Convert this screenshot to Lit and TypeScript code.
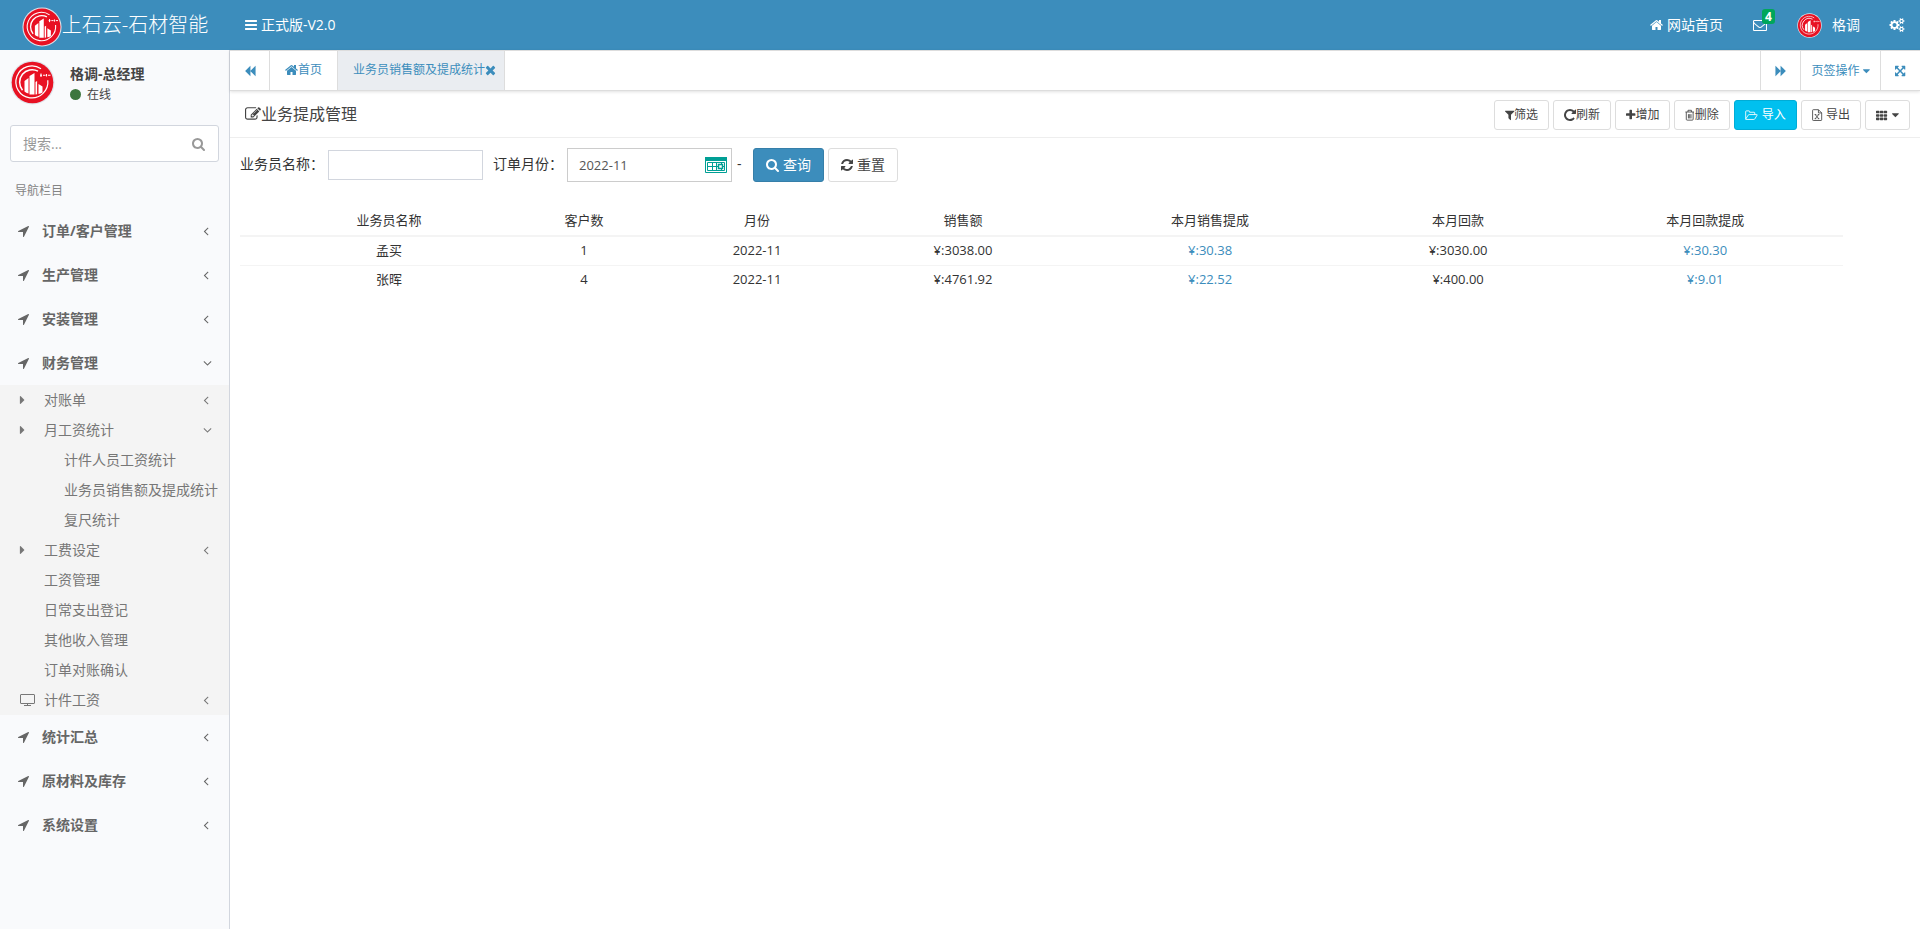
import { LitElement, html, svg, css, nothing } from "lit";
import { customElement, property, state } from "lit/decorators.js";
import { classMap } from "lit/directives/class-map.js";

/** Glyphs on a 1792-unit em: [left edge, advance, path data]. */
const ICONS: Record<string, [number, number, string]> = {
  arrow: [192, 1408, "M1593 349l-640 1280q-17 35-57 35-5 0-15-2-22-5-35.5-22.5t-13.5-39.5v-576h-576q-22 0-39.5-13.5t-22.5-35.5 4-42 29-30l1280-640q13-7 29-7 27 0 45 19 15 14 18.5 34.5t-6.5 39.5z"],
  left: [512, 640, "M1203 544q0 13-10 23l-393 393 393 393q10 10 10 23t-10 23l-50 50q-10 10-23 10t-23-10l-466-466q-10-10-10-23t10-23l466-466q10-10 23-10t23 10l50 50q10 10 10 23z"],
  down: [320, 1152, "M1395 736q0 13-10 23l-466 466q-10 10-23 10t-23-10l-466-466q-10-10-10-23t10-23l50-50q10-10 23-10t23 10l393 393 393-393q10-10 23-10t23 10l50 50q10 10 10 23z"],
  caretRight: [592, 576, "M1152 896q0 26-19 45l-448 448q-19 19-45 19t-45-19-19-45v-896q0-26 19-45t45-19 45 19l448 448q19 19 19 45z"],
  caretDown: [384, 1024, "M1408 704q0 26-19 45l-448 448q-19 19-45 19t-45-19l-448-448q-19-19-19-45t19-45 45-19h896q26 0 45 19t19 45z"],
  bars: [128, 1536, "M1664 1344v128q0 26-19 45t-45 19h-1408q-26 0-45-19t-19-45v-128q0-26 19-45t45-19h1408q26 0 45 19t19 45zm0-512v128q0 26-19 45t-45 19h-1408q-26 0-45-19t-19-45v-128q0-26 19-45t45-19h1408q26 0 45 19t19 45zm0-512v128q0 26-19 45t-45 19h-1408q-26 0-45-19t-19-45v-128q0-26 19-45t45-19h1408q26 0 45 19t19 45z"],
  home: [64, 1664, "M1472 992v480q0 26-19 45t-45 19h-384v-384h-256v384h-384q-26 0-45-19t-19-45v-480q0-1 .5-3t.5-3l575-474 575 474q1 2 1 6zm223-69l-62 74q-8 9-21 11h-3q-13 0-21-7l-692-577-692 577q-12 8-24 7-13-2-21-11l-62-74q-8-10-7-23.5t11-21.5l719-599q32-26 76-26t76 26l244 204v-195q0-14 9-23t23-9h192q14 0 23 9t9 23v408l219 182q10 8 11 21.5t-7 23.5z"],
  search: [64, 1664, "M1216 832q0-185-131.5-316.5t-316.5-131.5-316.5 131.5-131.5 316.5 131.5 316.5 316.5 131.5 316.5-131.5 131.5-316.5zm512 832q0 52-38 90t-90 38q-54 0-90-38l-343-342q-179 124-399 124-143 0-273.5-55.5t-225-150-150-225-55.5-273.5 55.5-273.5 150-225 225-150 273.5-55.5 273.5 55.5 225 150 150 225 55.5 273.5q0 220-124 399l343 343q37 37 37 90z"],
  refresh: [128, 1536, "M1639 1056q0 5-1 7-64 268-268 434.5t-478 166.5q-146 0-282.5-55t-243.5-157l-129 129q-19 19-45 19t-45-19-19-45v-448q0-26 19-45t45-19h448q26 0 45 19t19 45-19 45l-137 137q71 66 161 102t187 36q134 0 250-65t186-179q11-17 53-117 8-23 30-23h192q13 0 22.5 9.5t9.5 22.5zm25-800v448q0 26-19 45t-45 19h-448q-26 0-45-19t-19-45 19-45l138-138q-148-137-349-137-134 0-250 65t-186 179q-11 17-53 117-8 23-30 23h-199q-13 0-22.5-9.5t-9.5-22.5v-7q65-268 270-434.5t480-166.5q146 0 284 55.5t245 156.5l130-129q19-19 45-19t45 19 19 45z"],
  repeat: [128, 1536, "M1664 256v448q0 26-19 45t-45 19h-448q-42 0-59-40-17-39 14-69l138-138q-148-137-349-137-104 0-198.5 40.5t-163.5 109.5-109.5 163.5-40.5 198.5 40.5 198.5 109.5 163.5 163.5 109.5 198.5 40.5q119 0 225-52t179-147q7-10 23-12 15 0 25 9l137 138q9 8 9.5 20.5t-7.5 22.5q-109 132-264 204.5t-327 72.5q-156 0-298-61t-245-164-164-245-61-298 61-298 164-245 245-164 298-61q147 0 284.5 55.5t244.5 156.5l130-129q29-31 70-14 39 17 39 59z"],
  plus: [192, 1408, "M1600 736v192q0 40-28 68t-68 28h-416v416q0 40-28 68t-68 28h-192q-40 0-68-28t-28-68v-416h-416q-40 0-68-28t-28-68v-192q0-40 28-68t68-28h416v-416q0-40 28-68t68-28h192q40 0 68 28t28 68v416h416q40 0 68 28t28 68z"],
  filter: [192, 1408, "M1595 295q17 41-14 70l-493 493v742q0 42-39 59-13 5-25 5-27 0-45-19l-256-256q-19-19-19-45v-486l-493-493q-31-29-14-70 17-39 59-39h1280q42 0 59 39z"],
  times: [192, 1408, "M1490 1322q0 40-28 68l-136 136q-28 28-68 28t-68-28l-294-294-294 294q-28 28-68 28t-68-28l-136-136q-28-28-28-68t28-68l294-294-294-294q-28-28-28-68t28-68l136-136q28-28 68-28t68 28l294 294 294-294q28-28 68-28t68 28l136 136q28 28 28 68t-28 68l-294 294 294 294q28 28 28 68z"],
  backward: [0, 1792, "M1683 141q19-19 32-13t13 32v1472q0 26-13 32t-32-13l-710-710q-8-9-13-19v710q0 26-13 32t-32-13l-710-710q-19-19-19-45t19-45l710-710q19-19 32-13t13 32v710q5-11 13-19z"],
  forward: [0, 1792, "M109 1651q-19 19-32 13t-13-32v-1472q0-26 13-32t32 13l710 710q8 8 13 19v-710q0-26 13-32t32 13l710 710q19 19 19 45t-19 45l-710 710q-19 19-32 13t-13-32v-710q-5 10-13 19z"],
  mail: [0, 1792, "M1664 1504v-768q-32 36-69 66-268 206-426 338-51 43-83 67t-86.5 48.5-102.5 24.5h-2q-48 0-102.5-24.5t-86.5-48.5-83-67q-158-132-426-338-37-30-69-66v768q0 13 9.5 22.5t22.5 9.5h1472q13 0 22.5-9.5t9.5-22.5zm0-1051v-24.5l-.5-13-3-12.5-5.5-9-9-7.5-14-2.5h-1472q-13 0-22.5 9.5t-9.5 22.5q0 168 147 284 193 152 401 317 6 5 35 29.5t46 37.5 44.5 31.5 50.5 27.5 43 9h2q20 0 43-9t50.5-27.5 44.5-31.5 46-37.5 35-29.5q208-165 401-317 54-43 100.5-115.5t46.5-131.5zm128-37v1088q0 66-47 113t-113 47h-1472q-66 0-113-47t-47-113v-1088q0-66 47-113t113-47h1472q66 0 113 47t47 113z"],
  cogs: [0, 1920, "M832 896q0-106-75-181t-181-75-181 75-75 181 75 181 181 75 181-75 75-181zm768 512q0-52-38-90t-90-38-90 38-38 90q0 53 37.5 90.5t90.5 37.5 90.5-37.5 37.5-90.5zm0-1024q0-52-38-90t-90-38-90 38-38 90q0 53 37.5 90.5t90.5 37.5 90.5-37.5 37.5-90.5zm-384 421v185q0 10-7 19.5t-16 10.5l-155 24q-11 35-32 76 34 48 90 115 7 11 7 20 0 12-7 19-23 30-82.5 89.5t-78.5 59.5q-11 0-21-7l-115-90q-37 19-77 31-11 108-23 155-7 24-30 24h-186q-11 0-20-7.5t-10-17.5l-23-153q-34-10-75-31l-118 89q-7 7-20 7-11 0-21-8-144-133-144-160 0-9 7-19 10-14 41-53t47-61q-23-44-35-82l-152-24q-10-1-17-9.5t-7-19.5v-185q0-10 7-19.5t16-10.5l155-24q11-35 32-76-34-48-90-115-7-11-7-20 0-12 7-20 22-30 82-89t79-59q11 0 21 7l115 90q34-18 77-32 11-108 23-154 7-24 30-24h186q11 0 20 7.5t10 17.5l23 153q34 10 75 31l118-89q8-7 20-7 11 0 21 8 144 133 144 160 0 8-7 19-12 16-42 54t-45 60q23 48 34 82l152 23q10 2 17 10.5t7 19.5zm640 533v140q0 16-149 31-12 27-30 52 51 113 51 138 0 4-4 7-122 71-124 71-8 0-46-47t-52-68q-20 2-30 2t-30-2q-14 21-52 68t-46 47q-2 0-124-71-4-3-4-7 0-25 51-138-18-25-30-52-149-15-149-31v-140q0-16 149-31 13-29 30-52-51-113-51-138 0-4 4-7 4-2 35-20t59-34 30-16q8 0 46 46.5t52 67.5q20-2 30-2t30 2q51-71 92-112l6-2q4 0 124 70 4 3 4 7 0 25-51 138 17 23 30 52 149 15 149 31zm0-1024v140q0 16-149 31-12 27-30 52 51 113 51 138 0 4-4 7-122 71-124 71-8 0-46-47t-52-68q-20 2-30 2t-30-2q-14 21-52 68t-46 47q-2 0-124-71-4-3-4-7 0-25 51-138-18-25-30-52-149-15-149-31v-140q0-16 149-31 13-29 30-52-51-113-51-138 0-4 4-7 4-2 35-20t59-34 30-16q8 0 46 46.5t52 67.5q20-2 30-2t30 2q51-71 92-112l6-2q4 0 124 70 4 3 4 7 0 25-51 138 17 23 30 52 149 15 149 31z"],
  edit: [0, 1792, "M888 1184l116-116-152-152-116 116v56h96v96h56zm440-720q-16-16-33 1l-350 350q-17 17-1 33t33-1l350-350q17-17 1-33zm80 594v190q0 119-84.5 203.5t-203.5 84.5h-832q-119 0-203.5-84.5t-84.5-203.5v-832q0-119 84.5-203.5t203.5-84.5h832q63 0 117 25 15 7 18 23 3 17-9 29l-49 49q-14 14-32 8-23-6-45-6h-832q-66 0-113 47t-47 113v832q0 66 47 113t113 47h832q66 0 113-47t47-113v-126q0-13 9-22l64-64q15-15 35-7t20 29zm-96-738l288 288-672 672h-288v-288zm444 132l-92 92-288-288 92-92q28-28 68-28t68 28l152 152q28 28 28 68t-28 68z"],
  expand: [128, 1536, "M1411 541l-355 355 355 355 144-144q29-31 70-14 39 17 39 59v448q0 26-19 45t-45 19h-448q-42 0-59-40-17-39 14-69l144-144-355-355-355 355 144 144q31 30 14 69-17 40-59 40h-448q-26 0-45-19t-19-45v-448q0-42 40-59 39-17 69 14l144 144 355-355-355-355-144 144q-19 19-45 19-12 0-24-5-40-17-40-59v-448q0-26 19-45t45-19h448q42 0 59 40 17 39-14 69l-144 144 355 355 355-355-144-144q-31-30-14-69 17-40 59-40h448q26 0 45 19t19 45v448q0 42-39 59-13 5-25 5-26 0-45-19z"],
  grid: [64, 1664, "M160 256h320q96 0 96 96v192q0 96-96 96h-320q-96 0-96-96v-192q0-96 96-96zm576 0h320q96 0 96 96v192q0 96-96 96h-320q-96 0-96-96v-192q0-96 96-96zm576 0h320q96 0 96 96v192q0 96-96 96h-320q-96 0-96-96v-192q0-96 96-96zM160 768h320q96 0 96 96v192q0 96-96 96h-320q-96 0-96-96v-192q0-96 96-96zm576 0h320q96 0 96 96v192q0 96-96 96h-320q-96 0-96-96v-192q0-96 96-96zm576 0h320q96 0 96 96v192q0 96-96 96h-320q-96 0-96-96v-192q0-96 96-96zM160 1280h320q96 0 96 96v192q0 96-96 96h-320q-96 0-96-96v-192q0-96 96-96zm576 0h320q96 0 96 96v192q0 96-96 96h-320q-96 0-96-96v-192q0-96 96-96zm576 0h320q96 0 96 96v192q0 96-96 96h-320q-96 0-96-96v-192q0-96 96-96z"],
};

/** Outlined glyphs on a 14-unit em: [width, path data]. */
const OUTLINES: Record<string, [number, string]> = {
  trash: [11, "M.5 3.5h10M3.5 3.5v-2h4v2M1.5 3.5v8.5q0 1 1 1h6q1 0 1-1v-8.5M4 6v5M5.5 6v5M7 6v5"],
  folder: [15, "M.8 11.5v-8.5q0-.8.8-.8h3q.8 0 .8.8v.8h5.200q.8 0 .8.8v1.900M.8 11.700l3-4.600q.400-.6 1.100-.6h8.800q.8 0 .400.7l-2.600 4.300q-.400.7-1.200.7h-9q-.9 0-.5-.5z"],
  excel: [12, "M7.500.8h-6q-.8 0-.8.8v11q0 .8.8.8h9q.8 0 .8-.8v-8zM7.500.8v3.800h3.800M3.800 6.500l4 4.800M7.800 6.500l-4 4.800M3.200 6.500h1.800M6.700 6.500h1.800M3.200 11.300h1.800M6.700 11.300h1.800"],
  monitor: [15, "M1 1.500h13q.5 0 .5.5v8q0 .5-.5.5h-13q-.5 0-.5-.5v-8q0-.5.5-.5zM7.500 10.500v2M4 12.500h7"],
};

function icon(name: string) {
  if (OUTLINES[name]) {
    const [w, d] = OUTLINES[name];
    return html`<svg class="icon" viewBox="0 0 ${w} 14" aria-hidden="true">
      ${svg`<path d=${d} fill="none" stroke="currentColor" stroke-width="1"></path>`}
    </svg>`;
  }
  const [x, w, d] = ICONS[name];
  return html`<svg class="icon" viewBox="${x} 0 ${w} 1792" aria-hidden="true">
    ${svg`<path d=${d} fill="currentColor"></path>`}
  </svg>`;
}

function brandMark() {
  return html`<svg class="mark" viewBox="0 0 45 45" aria-hidden="true">
    <circle cx="22.500" cy="22.500" r="22" fill="#dfe3ea"></circle>
    <circle cx="22.500" cy="22.500" r="20.800" fill="#e81123"></circle>
    <path d="M31 8.800a16 16 0 1 0 6.800 11.500" fill="none" stroke="#fff" stroke-width="1.200"></path>
    <path d="M28 11.200a12.500 12.500 0 0 0-15.500 19" fill="none" stroke="#fff" stroke-width="1.500"></path>
    <path d="M14.500 21l4-3v15.500q-2.500-.7-4-2zM19.500 16l5-3v21.500h-5zM25.500 22l1.600-1v13.300l-1.600.2zM28.500 24l4 2.500v6q-2 1.200-4 1.600z" fill="#fff"></path>
    <path d="M30 15.300h2M31 13.500v3.500M33 15.300h2.500M36.500 14v2.500M38 15.300h2.500" stroke="#fff" stroke-width="1.100"></path>
  </svg>`;
}

const sharedStyles = css`
  :host { display: block; }
  * { box-sizing: border-box; }
  .icon { display: block; flex: none; height: 1em; overflow: visible; }
  .mark { display: block; flex: none; }
  a { color: inherit; text-decoration: none; }
  button, input { font: inherit; color: inherit; margin: 0; }
  button { cursor: pointer; }
`;

@customElement("app-header")
class AppHeader extends LitElement {
  static styles = [sharedStyles, css`
    .bar { display: flex; align-items: center; height: 50px; background: #3c8dbc; color: #fff; }
    .brand { display: flex; align-items: center; justify-content: center; width: 230px; height: 50px; font-size: 20px; font-weight: 300; }
    .brand .mark { width: 40px; height: 40px; margin-top: 4px; }
    .link { display: flex; align-items: center; gap: 4px; height: 50px; padding: 0 15px; border: 0; background: none; }
    .right { display: flex; margin-left: auto; }
    .mail { position: relative; }
    .badge { position: absolute; top: 9px; right: 7px; padding: 2px 3px; border-radius: 3px; background: #00a65a; font-size: 12px; line-height: 11px; font-weight: 700; min-width: 13px; text-align: center; }
    .user { gap: 10px; }
    .user .mark { width: 25px; height: 25px; }
  `];
  render() {
    return html`<header class="bar">
      <a class="brand" href="#">${brandMark()}<span>上石云-石材智能</span></a>
      <button class="link">${icon("bars")}<span>正式版-V2.0</span></button>
      <nav class="right">
        <a class="link" href="#">${icon("home")}<span>网站首页</span></a>
        <a class="link mail" href="#" aria-label="4">${icon("mail")}<span class="badge">4</span></a>
        <a class="link user" href="#">${brandMark()}<span>格调</span></a>
        <a class="link" href="#">${icon("cogs")}</a>
      </nav>
    </header>`;
  }
}

interface Item {
  label: string;
  icon?: string;
  chevron?: "left" | "down";
  children?: Item[];
}

const MENU: Item[] = [
  { label: "订单/客户管理", chevron: "left" },
  { label: "生产管理", chevron: "left" },
  { label: "安装管理", chevron: "left" },
  {
    label: "财务管理",
    chevron: "down",
    children: [
      { label: "对账单", icon: "caretRight", chevron: "left" },
      {
        label: "月工资统计",
        icon: "caretRight",
        chevron: "down",
        children: [{ label: "计件人员工资统计" }, { label: "业务员销售额及提成统计" }, { label: "复尺统计" }],
      },
      { label: "工费设定", icon: "caretRight", chevron: "left" },
      { label: "工资管理" },
      { label: "日常支出登记" },
      { label: "其他收入管理" },
      { label: "订单对账确认" },
      { label: "计件工资", icon: "monitor", chevron: "left" },
    ],
  },
  { label: "统计汇总", chevron: "left" },
  { label: "原材料及库存", chevron: "left" },
  { label: "系统设置", chevron: "left" },
];

@customElement("app-sidebar")
class AppSidebar extends LitElement {
  static styles = [sharedStyles, css`
    :host { background: #f9fafc; border-right: 1px solid #d2d6de; }
    .user { display: flex; gap: 15px; padding: 10px; align-items: center; }
    .user .mark { width: 45px; height: 45px; }
    .who { display: flex; flex-direction: column; gap: 2px; color: #444; padding-top: 2px; }
    .name { font-weight: 700; line-height: 20px; }
    .state { display: flex; align-items: center; gap: 6px; font-size: 12px; line-height: 18px; }
    .dot { width: 11px; height: 11px; border-radius: 50%; background: #3c763d; }
    .search { display: flex; align-items: center; height: 37px; margin: 10px; border: 1px solid #d2d6de; border-radius: 3px; background: #fff; color: #999; }
    .query { flex: 1; min-width: 0; height: 35px; padding: 0 12px; border: 0; background: none; outline: 0; }
    .query::placeholder { color: #999; opacity: 1; }
    .go { padding: 0 13px; border: 0; background: none; }
    .caption { padding: 9px 15px; font-size: 12px; line-height: 19px; color: #848484; }
    ul { list-style: none; margin: 0; padding: 0; }
    .row { display: flex; align-items: center; padding-right: 15px; color: #777; height: 30px; white-space: nowrap; }
    .top { height: 44px; padding-left: 18px; font-weight: 700; color: #666; }
    .sub { padding-left: 20px; }
    .leaf { padding-left: 64px; padding-right: 0; }
    .lead { width: 24px; flex: none; }
    .chev { width: 11px; margin-left: auto; }
    .tree { background: #f4f4f4; }
  `];
  private row(item: Item, level: string): unknown {
    const lead = level === "top" ? "arrow" : item.icon;
    return html`<li>
      <a href="#" class=${classMap({ row: true, [level]: true })}>
        ${level === "leaf" ? nothing : html`<span class="lead">${lead ? icon(lead) : nothing}</span>`}
        <span>${item.label}</span>
        ${item.chevron ? html`<span class="chev">${icon(item.chevron)}</span>` : nothing}
      </a>
      ${item.children
        ? html`<ul class="tree">${item.children.map((c) => this.row(c, level === "top" ? "sub" : "leaf"))}</ul>`
        : nothing}
    </li>`;
  }
  render() {
    return html`
      <div class="user">${brandMark()}
        <div class="who"><span class="name">格调-总经理</span><span class="state"><span class="dot"></span>在线</span></div>
      </div>
      <form class="search">
        <input class="query" type="text" placeholder="搜索..." aria-label="搜索" />
        <button class="go" type="button" aria-label="搜索">${icon("search")}</button>
      </form>
      <div class="caption">导航栏目</div>
      <ul>${MENU.map((m) => this.row(m, "top"))}</ul>`;
  }
}

@customElement("app-tabs")
class AppTabs extends LitElement {
  static styles = [sharedStyles, css`
    .strip { display: flex; height: 41px; border-top: 1px solid #ddd; border-bottom: 1px solid #ddd; background: #fff; color: #3c8dbc; font-size: 12px; box-shadow: 0 1px 3px rgba(0, 0, 0, 0.12); }
    .cell { display: flex; align-items: center; justify-content: center; border: 0; border-right: 1px solid #ddd; background: none; padding: 0 15px; }
    .square { width: 40px; padding: 0; }
    .tab { padding-bottom: 2px; }
    .tab .icon { height: 14px; }
    .active { background: #eaedf1; padding: 0 8px 2px 15px; }
    .right { display: flex; margin-left: auto; border-left: 1px solid #ddd; }
    .right .cell:last-child { border-right: 0; width: 39px; }
    .ops { width: 80px; gap: 3px; padding: 0; }
  `];
  render() {
    return html`<nav class="strip">
      <button class="cell square" aria-label="向左">${icon("backward")}</button>
      <a class="cell tab" href="#">${icon("home")}首页</a>
      <a class="cell tab active" href="#">业务员销售额及提成统计${icon("times")}</a>
      <div class="right">
        <button class="cell square" aria-label="向右">${icon("forward")}</button>
        <button class="cell ops">页签操作 ${icon("caretDown")}</button>
        <button class="cell square" aria-label="全屏">${icon("expand")}</button>
      </div>
    </nav>`;
  }
}

const TOOLS = [
  { icon: "filter", label: "筛选" },
  { icon: "repeat", label: "刷新", big: true },
  { icon: "plus", label: "增加" },
  { icon: "trash", label: "删除" },
  { icon: "folder", label: "导入", spaced: true, info: true },
  { icon: "excel", label: "导出", spaced: true },
];

const COLUMNS = ["业务员名称", "客户数", "月份", "销售额", "本月销售提成", "本月回款", "本月回款提成"];
const ROWS = [
  ["孟买", "1", "2022-11", "¥:3038.00", "¥:30.38", "¥:3030.00", "¥:30.30"],
  ["张晖", "4", "2022-11", "¥:4761.92", "¥:22.52", "¥:400.00", "¥:9.01"],
];
const LINKED = new Set([4, 6]);

@customElement("commission-page")
class CommissionPage extends LitElement {
  @property() heading = "业务提成管理";
  @state() private month = "2022-11";
  static styles = [sharedStyles, css`
    .title { display: flex; align-items: center; justify-content: space-between; padding: 9px 10px 7px 15px; border-bottom: 1px solid #eee; }
    h1 { display: flex; align-items: center; margin: 0; padding-bottom: 2px; font-size: 16px; line-height: 24px; font-weight: 400; color: #444; }
    .tools { display: flex; gap: 4px; }
    .btn { display: flex; align-items: center; justify-content: center; border: 1px solid #ddd; border-radius: 3px; background: #fff; color: #444; white-space: nowrap; }
    .small { height: 30px; padding: 0 10px; font-size: 12px; }
    .big .icon { height: 14px; }
    .spaced { gap: 4px; }
    .columns { gap: 5px; }
    .info { background: #00c0ef; border-color: #00acd6; color: #fff; }
    .filters { display: flex; align-items: center; padding: 10px; color: #333; }
    .filters label { white-space: nowrap; padding-bottom: 2px; }
    .text { width: 155px; height: 30px; margin: 0 10px 0 4px; padding: 0 10px; border: 1px solid #d2d6de; outline: 0; background: #fff; }
    .picker { display: flex; align-items: center; width: 165px; height: 34px; margin-left: 4px; padding-right: 4px; border: 1px solid #ccc; }
    .month { flex: 1; min-width: 0; height: 32px; border: 0; outline: 0; padding: 0 11px; font-size: 13px; color: #555; background: none; }
    .cal { width: 22px; height: 16px; flex: none; }
    .dash { width: 21px; padding: 0 0 2px 5px; }
    .large { height: 34px; padding: 0 12px; gap: 4px; margin-right: 4px; }
    .primary { background: #3c8dbc; border-color: #367fa9; color: #fff; }
    .list { padding: 13px 10px; }
    table { width: 96%; border-collapse: collapse; table-layout: fixed; font-size: 13px; color: #333; }
    th { height: 31px; padding: 0 0 1px; font-weight: 400; border-bottom: 2px solid #f4f4f4; }
    td { height: 29px; padding: 0 0 1px; text-align: center; border-bottom: 1px solid #f4f4f4; line-height: 18px; }
    tr:last-child td { border-bottom: 0; }
    td a { color: #3c8dbc; }
    .c-pick { width: 29px; }
    .c0 { width: 240px; }
    .c1 { width: 150px; }
    .c2 { width: 196px; }
    .c3 { width: 216px; }
    .c4 { width: 278px; }
    .c5 { width: 218px; }
    .c6 { width: 276px; }
  `];
  render() {
    return html`
      <div class="title">
        <h1>${icon("edit")}${this.heading}</h1>
        <div class="tools">
          ${TOOLS.map((t) => html`<button class=${classMap({ btn: true, small: true, spaced: !!t.spaced, info: !!t.info, big: !!t.big })}>${icon(t.icon)}<span>${t.label}</span></button>`)}
          <button class="btn small columns" aria-label="列">${icon("grid")}${icon("caretDown")}</button>
        </div>
      </div>
      <form class="filters">
        <label for="name">业务员名称：</label>
        <input class="text" id="name" type="text" />
        <label for="month">订单月份：</label>
        <div class="picker">
          <input class="month" id="month" type="text" .value=${this.month} />
          <svg class="cal" viewBox="0 0 22 16" aria-hidden="true" fill="none" stroke="#009f95">
            <path d="M.5.500h21v15h-21z"></path>
            <path d="M0 0h22v4h-22z" fill="#009f95" stroke="none"></path>
            <path d="M2.500 5.500h17v8h-17zM2.500 9.500h17M7.500 5.500v8M11.500 5.500v8M16.500 5.500v8"></path>
            <path d="M13.500 7.500h4v4h-4z" fill="#fff" stroke-width="1.500"></path>
          </svg>
        </div>
        <span class="dash">-</span>
        <button class="btn large primary" type="button">${icon("search")}<span>查询</span></button>
        <button class="btn large" type="reset">${icon("refresh")}<span>重置</span></button>
      </form>
      <div class="list">
        <table>
          <colgroup><col class="c-pick" />${COLUMNS.map((_, i) => html`<col class="c${i}" />`)}</colgroup>
          <thead><tr><th></th>${COLUMNS.map((c) => html`<th scope="col">${c}</th>`)}</tr></thead>
          <tbody>
            ${ROWS.map((r) => html`<tr><td></td>${r.map((v, i) => html`<td>${LINKED.has(i) ? html`<a href="#">${v}</a>` : v}</td>`)}</tr>`)}
          </tbody>
        </table>
      </div>`;
  }
}

@customElement("app-root")
class AppRoot extends LitElement {
  static styles = css`
    :host { display: flex; flex-direction: column; min-height: 100vh; background: #fff; font-family: "Open Sans", "Noto Sans CJK SC", sans-serif; font-size: 14px; line-height: 20px; color: #333; }
    .body { display: flex; flex: 1; }
    .side { width: 230px; flex: none; box-sizing: border-box; }
    .main { flex: 1; min-width: 0; }
  `;
  render() {
    return html`<app-header></app-header>
      <div class="body">
        <app-sidebar class="side"></app-sidebar>
        <main class="main"><app-tabs></app-tabs><commission-page></commission-page></main>
      </div>`;
  }
}
